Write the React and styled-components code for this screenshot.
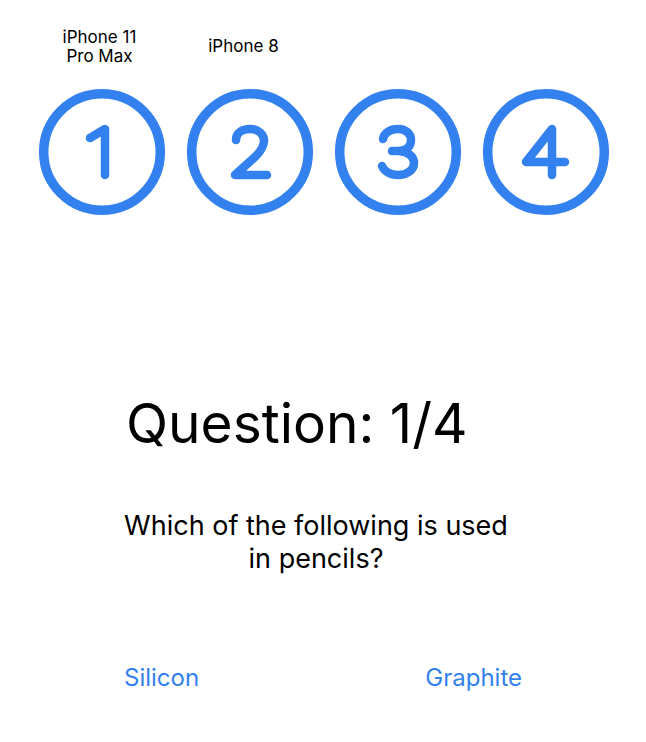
import React from 'react'
import styled, { createGlobalStyle } from 'styled-components'

var c_blue = '#3381EE'

const GlobalStyle = createGlobalStyle`
  html, body {
    margin: 0;
    padding: 0;
    background: #FFFFFF;
  }
  body {
    font-family: Inter, "Liberation Sans", sans-serif;
    color: #000000;
  }
`

const Page = styled.div`
  width: 646px;
  height: 742px;
  padding-top: 27.5px;
  box-sizing: border-box;
`

const Labels = styled.div`
  display: grid;
  grid-template-columns: repeat(4, 144px);
  align-items: center;
  padding-left: 27.5px;
  height: 39px;
`

const Label = styled.div`
  font-size: 17px;
  line-height: 19.5px;
  text-align: center;
`

const Circles = styled.div`
  display: flex;
  gap: 20px;
  padding-left: 37.5px;
  margin-top: 21.8px;
`

const Content = styled.div`
  width: 398px;
  margin-left: 124px;
`

const Title = styled.h1`
  margin: 174.3px 0 0;
  padding-left: 2px;
  font-size: 55px;
  font-weight: 400;
  line-height: 64px;
`

const Prompt = styled.p`
  width: 396px;
  margin: 54px 0 0 -6px;
  font-size: 27px;
  line-height: 33px;
  text-align: center;
`

const Answers = styled.div`
  display: flex;
  justify-content: space-between;
  margin-top: 88px;
`

const Answer = styled.button`
  border: none;
  background: none;
  padding: 0;
  font-family: inherit;
  font-size: 24px;
  line-height: 30px;
  color: ${c_blue};
  cursor: pointer;
`

// stroke paths for the numbered circle icons, centred on 0,0
const digits = {
  1: 'M -12 -14 L 3 -23 L 3 23',
  2: 'M -14 -12 C -14 -19 -8 -23 0 -23 C 8 -23 14 -18 14 -11 C 14 -5 10 0 5 5 L -15 23 L 17 23',
  3: 'M -15 -13 C -14 -19 -8 -23 0 -23 C 8 -23 13 -18 13 -12 C 13 -5 8 -1 0 -1 L -6 -1 M 0 -1 C 9 -1 16 4 16 11 C 16 18 9 23 0 23 C -8 23 -14 19 -16 14',
  4: 'M 6 23 L 6 -23 L -20 10 L 19 10',
}

function NumberCircle({ n }) {
  return (
    <svg width="128" height="128" viewBox="-64 -64 128 128" aria-label={'Question ' + n}>
      <circle cx="0" cy="0" r="58.3" fill="none" stroke={c_blue} strokeWidth="9.5" />
      <path
        d={digits[n]}
        fill="none"
        stroke={c_blue}
        strokeWidth="8.5"
        strokeLinecap="round"
        strokeLinejoin="round"
      />
    </svg>
  )
}

export default function App() {
  return (
    <Page>
      <GlobalStyle />
      <Labels>
        <Label>iPhone 11<br />Pro Max</Label>
        <Label>iPhone 8</Label>
      </Labels>
      <Circles>
        {[1, 2, 3, 4].map((n) => (
          <NumberCircle key={n} n={n} />
        ))}
      </Circles>
      <Content>
        <Title>Question: 1/4</Title>
        <Prompt>Which of the following is used in pencils?</Prompt>
        <Answers>
          <Answer>Silicon</Answer>
          <Answer>Graphite</Answer>
        </Answers>
      </Content>
    </Page>
  )
}
